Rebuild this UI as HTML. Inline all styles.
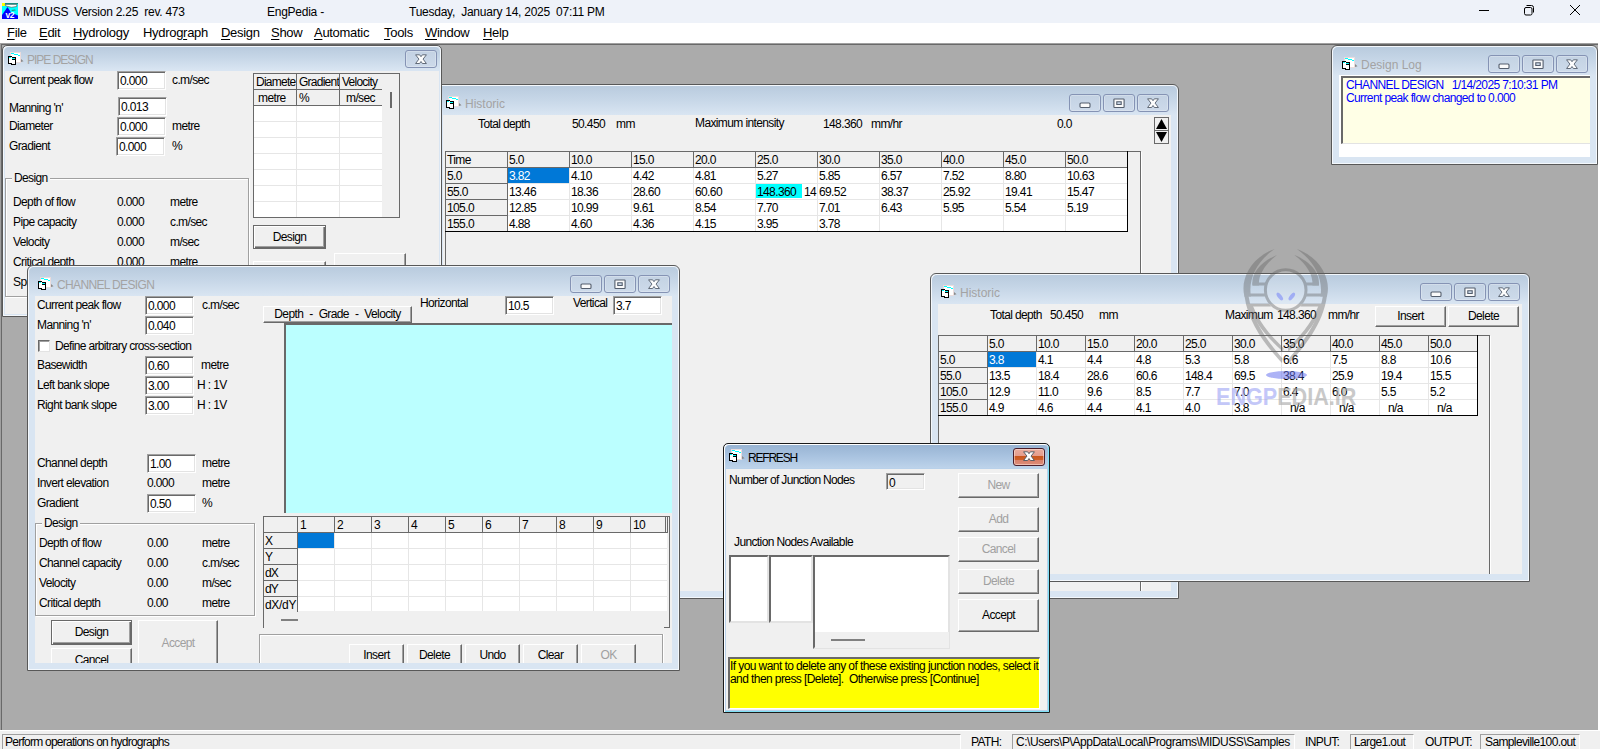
<!DOCTYPE html>
<html><head><meta charset="utf-8"><title>MIDUSS</title><style>
html,body{margin:0;padding:0}
body{width:1600px;height:749px;overflow:hidden;background:#fff;position:relative;font-family:"Liberation Sans",sans-serif;font-size:12px}
div,span,svg.abs,.abs{position:absolute}
#tbar{left:0;top:0;width:1600px;height:23px;background:#eef2f9}
#appico{position:absolute;left:2px;top:3px}
#apptitle span{position:absolute;top:5px;font-size:12px;line-height:15px;white-space:pre;letter-spacing:-0.25px;color:#000}
#wctl{position:absolute;left:1479px;top:0}
#mbar{left:0;top:23px;width:1600px;height:20px;background:#fff}
.mi{top:25px;font-size:13px;line-height:15px;color:#000;white-space:pre;letter-spacing:-0.3px}
.mi u{text-decoration:underline;text-underline-offset:2px}
#mdi{left:0;top:43px;width:1598px;height:687px;background:#ababab;overflow:hidden;border-top:1px solid #a0a0a0;border-left:1px solid #a0a0a0;box-shadow:inset 1px 1px #696969;box-sizing:border-box}
#mdi>*{margin-left:-1px;margin-top:-44px}
.t{font-size:12px;line-height:14px;white-space:pre;color:#000;letter-spacing:-0.62px}
.lg{background:#f0f0f0;padding:0 2px}
.tb{box-sizing:border-box;border:1px solid;border-color:#a0a0a0 #fff #fff #a0a0a0;box-shadow:inset 1px 1px #696969,inset -1px -1px #e3e3e3;overflow:hidden}
.tb span{left:2px;top:2px;font-size:12px;line-height:14px;letter-spacing:-0.62px;white-space:pre}
.btn{box-sizing:border-box;background:#f0f0f0;border:1px solid;border-color:#fff #696969 #696969 #fff;box-shadow:inset -1px -1px #a0a0a0;text-align:center;font-size:12px;letter-spacing:-0.62px;white-space:pre;color:#000}
.btn.def{border-color:#696969;box-shadow:inset 1px 1px #fff,inset -1px -1px #696969,inset -2px -2px #a0a0a0}
.btn.dis{color:#a0a0a0}
.btn.flat{border-color:#fff #696969 #696969 #fff}
.grp{box-sizing:border-box;border:1px solid #a0a0a0;box-shadow:inset 1px 1px #fff,1px 1px #fff}
.lb{box-sizing:border-box;background:#fff;border:2px solid;border-color:#696969 #e3e3e3 #e3e3e3 #696969}
.sp{box-sizing:border-box;border:1px solid;border-color:#a0a0a0 #fff #fff #a0a0a0;background:#f0f0f0}
#sbar{left:0;top:730px;width:1600px;height:19px;background:#f0f0f0;border-top:1px solid #fff;box-sizing:border-box}
.clip{overflow:hidden}
.win{box-sizing:border-box;border:1px solid #585858;border-radius:6px 6px 0 0;background:#d9e5f2;box-shadow:inset 1px 1px #f4f8fc,inset -1px -1px #f4f8fc}
.win::before{content:"";position:absolute;left:1px;top:1px;right:1px;height:29px;border-radius:5px 5px 0 0;background:linear-gradient(#b9cbde,#c6d6e7 45%,#d9e5f2)}
.win.thin{border-radius:5px 5px 0 0}
.win.thin::before{height:23px}
.win.act{border-color:#1a1a1a;background:#b9d1ea;box-shadow:inset 1px 1px #fff,inset -1px -1px #7fe0f5}
.win.act::before{background:linear-gradient(#98b4d3,#a9c3e0 50%,#bdd3ea)}
.wt{font-size:12px;line-height:14px;color:#a3a3a3;white-space:pre}
.win.act .wt{color:#000}
.cb{box-sizing:border-box;border:1px solid #8593b4;border-radius:3px;background:linear-gradient(#c3d2e3,#cddaea);box-shadow:inset 0 0 0 1px rgba(255,255,255,.25)}
.cb i,.cbx i{position:absolute;left:0;right:0;text-align:center;line-height:0}
.cb i svg,.cbx i svg{position:static}
.cbx{box-sizing:border-box;border:1px solid #4b1f2c;border-radius:3px;background:linear-gradient(#e9ab9c 0,#e59c8c 45%,#c9561d 46%,#cf5f2a 68%,#d8806a 69%,#dd8c78 100%);box-shadow:inset 0 0 0 1px rgba(255,230,220,.55)}
</style></head><body>
<div id="tbar"></div>
<svg id="appico" width="16" height="16" viewBox="0 0 16 16"><rect width="16" height="16" fill="#0ff"/><rect width="3" height="3" fill="#ff0"/><path d="M3 0h13v1H3z" fill="#1a8a80"/><path d="M3 1.500h12l-.5 2-5 .8L4 3z" fill="#fff" stroke="#5a4a48" stroke-width=".6"/><path d="M5.500 4L9 9.500l7 3V16H0v-4z" fill="#0000fe"/><path d="M9 7l4-.500 1 .8-3.500 .7z" fill="#2a8a7a"/><text x="3.600" y="14.600" font-family="Liberation Sans,sans-serif" font-weight="bold" font-size="8.500" fill="#fff" letter-spacing="-.5">v2</text></svg>
<span id="apptitle"><span style="left:23px">MIDUSS  Version 2.25  rev. 473</span><span style="left:267px">EngPedia -</span><span style="left:409px">Tuesday,  January 14, 2025  07:11 PM</span></span>
<svg id="wctl" width="120" height="23" viewBox="0 0 120 23"><path d="M0 10.500h10" stroke="#000" stroke-width="1" fill="none"/><path d="M47.500 5.500h5a2 2 0 0 1 2 2v5" stroke="#000" stroke-width="1" fill="none"/><rect x="45.500" y="7.500" width="7.500" height="7.500" rx="1.500" fill="none" stroke="#000" stroke-width="1"/><path d="M91 5l10 10M101 5l-10 10" stroke="#000" stroke-width="1" fill="none"/></svg>
<div id="mbar"></div>
<span class="mi" style="left:7px"><u>F</u>ile</span>
<span class="mi" style="left:39px"><u>E</u>dit</span>
<span class="mi" style="left:73px"><u>H</u>ydrology</span>
<span class="mi" style="left:143px">Hydrog<u>r</u>aph</span>
<span class="mi" style="left:221px"><u>D</u>esign</span>
<span class="mi" style="left:271px"><u>S</u>how</span>
<span class="mi" style="left:314px"><u>A</u>utomatic</span>
<span class="mi" style="left:384px"><u>T</u>ools</span>
<span class="mi" style="left:425px"><u>W</u>indow</span>
<span class="mi" style="left:483px"><u>H</u>elp</span>
<div id="mdi">
<div class="win" style="left:435px;top:84px;width:744px;height:515px">
<div class="ico" style="left:10px;top:11px"><svg class="wi" width="17" height="14" viewBox="0 0 17 14"><rect x="2.500" y="0.500" width="10" height="10" fill="#fff" stroke="#eadcdc" stroke-width="1"/><g shape-rendering="crispEdges"><rect x="3" y="1" width="3" height="1" fill="#0ff"/><rect x="6" y="2" width="4" height="1" fill="#0ff"/><rect x="10" y="3" width="2" height="1" fill="#0ff"/><path d="M0 4h4v1h4v8H3v-1H0z" fill="#000"/><path d="M1 5h3v1h3v6H4v-1H1z" fill="#fff"/><rect x="1" y="5" width="2" height="1" fill="#0ff"/><rect x="4" y="6" width="3" height="1" fill="#0ff"/><rect x="4" y="7" width="3" height="1" fill="#000"/></g><path d="M13 7l2.500 2.200-2.500 .8z" fill="#8a8a8a"/></svg></div>
<span class="wt" style="left:29px;top:12px;letter-spacing:0px">Historic</span>
</div>
<div class="cb" style="left:1069px;top:94px;width:32px;height:18px"><i style="top:7px"><svg width="13" height="7" viewBox="0 0 13 7"><rect x="1" y="1" width="10" height="4.500" rx="1" fill="#fafafa" stroke="#535d6c" stroke-width="1.100"/></svg></i></div>
<div class="cb" style="left:1103px;top:94px;width:32px;height:18px"><i style="top:3px"><svg width="13" height="11" viewBox="0 0 13 11"><path fill-rule="evenodd" d="M1.500 1h9a.6.6 0 0 1 .6.6v7.300a.6.6 0 0 1-.6.6h-9a.6.6 0 0 1-.6-.6V1.600a.6.6 0 0 1 .6-.6zM3.800 3.700v2.800h4.400V3.700z" fill="#fafafa" stroke="#535d6c" stroke-width="1.100"/></svg></i></div>
<div class="cb" style="left:1137px;top:94px;width:32px;height:18px"><i style="top:3px"><svg width="13" height="11" viewBox="0 0 13 11"><path d="M.600 .800h4L6 2.700 7.400 .800h4L8.100 5.100l3.300 4.400h-4L6 7.500 4.600 9.500h-4L3.900 5.100z" fill="#fdfdfd" stroke="#535d6c" stroke-width=".9" stroke-linejoin="round"/></svg></i></div>
<div style="left:443px;top:115px;width:728px;height:476px;background:#f0f0f0"></div>
<span class="t" style="left:478px;top:117px;">Total depth</span>
<span class="t" style="left:572px;top:117px;">50.450</span>
<span class="t" style="left:616px;top:117px;">mm</span>
<span class="t" style="left:695px;top:116px;">Maximum intensity</span>
<span class="t" style="left:823px;top:117px;">148.360</span>
<span class="t" style="left:871px;top:117px;">mm/hr</span>
<span class="t" style="left:1057px;top:117px;">0.0</span>
<div style="left:1154px;top:117px;width:15px;height:27px;background:#f0f0f0;border:1px solid #696969;box-sizing:border-box"></div>
<div style="left:1154px;top:130px;width:15px;height:1px;background:#696969"></div>
<svg class="abs" style="left:1156px;top:119px" width="11" height="23" viewBox="0 0 11 23"><path d="M5.500 0L11 10H0z" fill="#000"/><path d="M0 13h11L5.500 23z" fill="#000"/></svg>
<div style="left:445px;top:151px;width:696px;height:440px;border-left:1px solid #696969;border-top:1px solid #696969;border-right:1px solid #696969;box-sizing:border-box"></div>
<div style="left:1141px;top:152px;width:1px;height:439px;background:#fff"></div>
<div style="left:507px;top:167px;width:620px;height:64px;background:#fff"></div>
<div style="left:569px;top:167px;width:1px;height:64px;background:#e6e6e6"></div>
<div style="left:631px;top:167px;width:1px;height:64px;background:#e6e6e6"></div>
<div style="left:693px;top:167px;width:1px;height:64px;background:#e6e6e6"></div>
<div style="left:755px;top:167px;width:1px;height:64px;background:#e6e6e6"></div>
<div style="left:817px;top:167px;width:1px;height:64px;background:#e6e6e6"></div>
<div style="left:879px;top:167px;width:1px;height:64px;background:#e6e6e6"></div>
<div style="left:941px;top:167px;width:1px;height:64px;background:#e6e6e6"></div>
<div style="left:1003px;top:167px;width:1px;height:64px;background:#e6e6e6"></div>
<div style="left:1065px;top:167px;width:1px;height:64px;background:#e6e6e6"></div>
<div style="left:507px;top:183px;width:620px;height:1px;background:#e6e6e6"></div>
<div style="left:507px;top:199px;width:620px;height:1px;background:#e6e6e6"></div>
<div style="left:507px;top:215px;width:620px;height:1px;background:#e6e6e6"></div>
<div style="left:445px;top:151px;width:63px;height:17px;border:1px solid #696969;box-sizing:border-box;background:#f0f0f0"></div>
<span class="t" style="left:447px;top:153px;">Time</span>
<div style="left:507px;top:151px;width:63px;height:17px;border:1px solid #696969;box-sizing:border-box;background:#f0f0f0"></div>
<span class="t" style="left:509px;top:153px;">5.0</span>
<div style="left:569px;top:151px;width:63px;height:17px;border:1px solid #696969;box-sizing:border-box;background:#f0f0f0"></div>
<span class="t" style="left:571px;top:153px;">10.0</span>
<div style="left:631px;top:151px;width:63px;height:17px;border:1px solid #696969;box-sizing:border-box;background:#f0f0f0"></div>
<span class="t" style="left:633px;top:153px;">15.0</span>
<div style="left:693px;top:151px;width:63px;height:17px;border:1px solid #696969;box-sizing:border-box;background:#f0f0f0"></div>
<span class="t" style="left:695px;top:153px;">20.0</span>
<div style="left:755px;top:151px;width:63px;height:17px;border:1px solid #696969;box-sizing:border-box;background:#f0f0f0"></div>
<span class="t" style="left:757px;top:153px;">25.0</span>
<div style="left:817px;top:151px;width:63px;height:17px;border:1px solid #696969;box-sizing:border-box;background:#f0f0f0"></div>
<span class="t" style="left:819px;top:153px;">30.0</span>
<div style="left:879px;top:151px;width:63px;height:17px;border:1px solid #696969;box-sizing:border-box;background:#f0f0f0"></div>
<span class="t" style="left:881px;top:153px;">35.0</span>
<div style="left:941px;top:151px;width:63px;height:17px;border:1px solid #696969;box-sizing:border-box;background:#f0f0f0"></div>
<span class="t" style="left:943px;top:153px;">40.0</span>
<div style="left:1003px;top:151px;width:63px;height:17px;border:1px solid #696969;box-sizing:border-box;background:#f0f0f0"></div>
<span class="t" style="left:1005px;top:153px;">45.0</span>
<div style="left:1065px;top:151px;width:63px;height:17px;border:1px solid #696969;box-sizing:border-box;background:#f0f0f0"></div>
<span class="t" style="left:1067px;top:153px;">50.0</span>
<div style="left:445px;top:167px;width:63px;height:17px;border:1px solid #696969;box-sizing:border-box;background:#f0f0f0"></div>
<span class="t" style="left:447px;top:169px;">5.0</span>
<div style="left:445px;top:183px;width:63px;height:17px;border:1px solid #696969;box-sizing:border-box;background:#f0f0f0"></div>
<span class="t" style="left:447px;top:185px;">55.0</span>
<div style="left:445px;top:199px;width:63px;height:17px;border:1px solid #696969;box-sizing:border-box;background:#f0f0f0"></div>
<span class="t" style="left:447px;top:201px;">105.0</span>
<div style="left:445px;top:215px;width:63px;height:17px;border:1px solid #696969;box-sizing:border-box;background:#f0f0f0"></div>
<span class="t" style="left:447px;top:217px;">155.0</span>
<div style="left:445px;top:231px;width:683px;height:1px;background:#000"></div>
<div style="left:1127px;top:151px;width:1px;height:81px;background:#000"></div>
<div style="left:508px;top:168px;width:61px;height:15px;background:#0078d7"></div>
<span class="t" style="left:509px;top:169px;color:#fff">3.82</span>
<span class="t" style="left:571px;top:169px;">4.10</span>
<span class="t" style="left:633px;top:169px;">4.42</span>
<span class="t" style="left:695px;top:169px;">4.81</span>
<span class="t" style="left:757px;top:169px;">5.27</span>
<span class="t" style="left:819px;top:169px;">5.85</span>
<span class="t" style="left:881px;top:169px;">6.57</span>
<span class="t" style="left:943px;top:169px;">7.52</span>
<span class="t" style="left:1005px;top:169px;">8.80</span>
<span class="t" style="left:1067px;top:169px;">10.63</span>
<span class="t" style="left:509px;top:185px;">13.46</span>
<span class="t" style="left:571px;top:185px;">18.36</span>
<span class="t" style="left:633px;top:185px;">28.60</span>
<span class="t" style="left:695px;top:185px;">60.60</span>
<div style="left:756px;top:184px;width:46px;height:14px;background:#00ffff"></div>
<span class="t" style="left:757px;top:185px;">148.360</span>
<span class="t" style="left:804px;top:185px;">14</span>
<span class="t" style="left:819px;top:185px;">69.52</span>
<span class="t" style="left:881px;top:185px;">38.37</span>
<span class="t" style="left:943px;top:185px;">25.92</span>
<span class="t" style="left:1005px;top:185px;">19.41</span>
<span class="t" style="left:1067px;top:185px;">15.47</span>
<span class="t" style="left:509px;top:201px;">12.85</span>
<span class="t" style="left:571px;top:201px;">10.99</span>
<span class="t" style="left:633px;top:201px;">9.61</span>
<span class="t" style="left:695px;top:201px;">8.54</span>
<span class="t" style="left:757px;top:201px;">7.70</span>
<span class="t" style="left:819px;top:201px;">7.01</span>
<span class="t" style="left:881px;top:201px;">6.43</span>
<span class="t" style="left:943px;top:201px;">5.95</span>
<span class="t" style="left:1005px;top:201px;">5.54</span>
<span class="t" style="left:1067px;top:201px;">5.19</span>
<span class="t" style="left:509px;top:217px;">4.88</span>
<span class="t" style="left:571px;top:217px;">4.60</span>
<span class="t" style="left:633px;top:217px;">4.36</span>
<span class="t" style="left:695px;top:217px;">4.15</span>
<span class="t" style="left:757px;top:217px;">3.95</span>
<span class="t" style="left:819px;top:217px;">3.78</span>
<div class="win thin" style="left:2px;top:45px;width:440px;height:272px">
<div class="ico" style="left:5px;top:6px"><svg class="wi" width="17" height="14" viewBox="0 0 17 14"><rect x="2.500" y="0.500" width="10" height="10" fill="#fff" stroke="#eadcdc" stroke-width="1"/><g shape-rendering="crispEdges"><rect x="3" y="1" width="3" height="1" fill="#0ff"/><rect x="6" y="2" width="4" height="1" fill="#0ff"/><rect x="10" y="3" width="2" height="1" fill="#0ff"/><path d="M0 4h4v1h4v8H3v-1H0z" fill="#000"/><path d="M1 5h3v1h3v6H4v-1H1z" fill="#fff"/><rect x="1" y="5" width="2" height="1" fill="#0ff"/><rect x="4" y="6" width="3" height="1" fill="#0ff"/><rect x="4" y="7" width="3" height="1" fill="#000"/></g><path d="M13 7l2.500 2.200-2.500 .8z" fill="#8a8a8a"/></svg></div>
<span class="wt" style="left:24px;top:7px;letter-spacing:-1px">PIPE DESIGN</span>
</div>
<div class="cb" style="left:405px;top:50px;width:32px;height:18px"><i style="top:3px"><svg width="13" height="11" viewBox="0 0 13 11"><path d="M.600 .800h4L6 2.700 7.400 .800h4L8.100 5.100l3.300 4.400h-4L6 7.500 4.600 9.500h-4L3.900 5.100z" fill="#fdfdfd" stroke="#535d6c" stroke-width=".9" stroke-linejoin="round"/></svg></i></div>
<div style="left:5px;top:71px;width:434px;height:243px;background:#f0f0f0"></div>
<span class="t" style="left:9px;top:73px;">Current peak flow</span>
<div class="tb" style="left:117px;top:71px;width:49px;height:19px;background:#fff;"><span>0.000</span></div>
<span class="t" style="left:172px;top:73px;">c.m/sec</span>
<span class="t" style="left:9px;top:101px;">Manning 'n'</span>
<div class="tb" style="left:118px;top:97px;width:49px;height:19px;background:#fff;"><span>0.013</span></div>
<span class="t" style="left:9px;top:119px;">Diameter</span>
<div class="tb" style="left:117px;top:117px;width:49px;height:19px;background:#fff;"><span>0.000</span></div>
<span class="t" style="left:172px;top:119px;">metre</span>
<span class="t" style="left:9px;top:139px;">Gradient</span>
<div class="tb" style="left:116px;top:137px;width:49px;height:19px;background:#fff;"><span>0.000</span></div>
<span class="t" style="left:172px;top:139px;">%</span>
<div class="grp" style="left:5px;top:178px;width:244px;height:119px;"></div>
<span class="t lg" style="left:12px;top:171px">Design</span>
<span class="t" style="left:13px;top:195px;">Depth of flow</span>
<span class="t" style="left:117px;top:195px;">0.000</span>
<span class="t" style="left:170px;top:195px;">metre</span>
<span class="t" style="left:13px;top:215px;">Pipe capacity</span>
<span class="t" style="left:117px;top:215px;">0.000</span>
<span class="t" style="left:170px;top:215px;">c.m/sec</span>
<span class="t" style="left:13px;top:235px;">Velocity</span>
<span class="t" style="left:117px;top:235px;">0.000</span>
<span class="t" style="left:170px;top:235px;">m/sec</span>
<span class="t" style="left:13px;top:255px;">Critical depth</span>
<span class="t" style="left:117px;top:255px;">0.000</span>
<span class="t" style="left:170px;top:255px;">metre</span>
<span class="t" style="left:13px;top:275px;">Specific energy</span>
<span class="t" style="left:117px;top:275px;">0.000</span>
<span class="t" style="left:170px;top:275px;">metre</span>
<div style="left:253px;top:73px;width:147px;height:145px;border:1px solid #696969;box-sizing:border-box;background:#f0f0f0"></div>
<div style="left:254px;top:105px;width:128px;height:112px;background:#fff"></div>
<div style="left:296px;top:105px;width:1px;height:112px;background:#e6e6e6"></div>
<div style="left:339px;top:105px;width:1px;height:112px;background:#e6e6e6"></div>
<div style="left:254px;top:121px;width:128px;height:1px;background:#e6e6e6"></div>
<div style="left:254px;top:137px;width:128px;height:1px;background:#e6e6e6"></div>
<div style="left:254px;top:153px;width:128px;height:1px;background:#e6e6e6"></div>
<div style="left:254px;top:169px;width:128px;height:1px;background:#e6e6e6"></div>
<div style="left:254px;top:185px;width:128px;height:1px;background:#e6e6e6"></div>
<div style="left:254px;top:201px;width:128px;height:1px;background:#e6e6e6"></div>
<div style="left:253px;top:73px;width:44px;height:17px;border:1px solid #696969;box-sizing:border-box;background:#f0f0f0"></div>
<div style="left:253px;top:89px;width:44px;height:17px;border:1px solid #696969;box-sizing:border-box;background:#f0f0f0"></div>
<span class="t" style="left:256px;top:75px;letter-spacing:-0.75px">Diamete</span>
<span class="t" style="left:258px;top:91px;">metre</span>
<div style="left:296px;top:73px;width:44px;height:17px;border:1px solid #696969;box-sizing:border-box;background:#f0f0f0"></div>
<div style="left:296px;top:89px;width:44px;height:17px;border:1px solid #696969;box-sizing:border-box;background:#f0f0f0"></div>
<span class="t" style="left:299px;top:75px;letter-spacing:-0.75px">Gradient</span>
<span class="t" style="left:299px;top:91px;">%</span>
<div style="left:339px;top:73px;width:44px;height:17px;border:1px solid #696969;box-sizing:border-box;background:#f0f0f0"></div>
<div style="left:339px;top:89px;width:44px;height:17px;border:1px solid #696969;box-sizing:border-box;background:#f0f0f0"></div>
<span class="t" style="left:342px;top:75px;letter-spacing:-0.75px">Velocity</span>
<span class="t" style="left:346px;top:91px;">m/sec</span>
<div style="left:382px;top:74px;width:1px;height:32px;background:#f0f0f0"></div>
<div style="left:390px;top:92px;width:2px;height:16px;background:#696969"></div>
<div class="btn def" style="left:253px;top:225px;width:73px;height:24px;line-height:22px;">Design</div>
<div class="btn " style="left:253px;top:261px;width:73px;height:24px;line-height:22px;">Cancel</div>
<div class="btn dis" style="left:334px;top:253px;width:72px;height:40px;line-height:38px;">Accept</div>
<div class="win" style="left:1331px;top:45px;width:267px;height:120px">
<div class="ico" style="left:10px;top:11px"><svg class="wi" width="17" height="14" viewBox="0 0 17 14"><rect x="2.500" y="0.500" width="10" height="10" fill="#fff" stroke="#eadcdc" stroke-width="1"/><g shape-rendering="crispEdges"><rect x="3" y="1" width="3" height="1" fill="#0ff"/><rect x="6" y="2" width="4" height="1" fill="#0ff"/><rect x="10" y="3" width="2" height="1" fill="#0ff"/><path d="M0 4h4v1h4v8H3v-1H0z" fill="#000"/><path d="M1 5h3v1h3v6H4v-1H1z" fill="#fff"/><rect x="1" y="5" width="2" height="1" fill="#0ff"/><rect x="4" y="6" width="3" height="1" fill="#0ff"/><rect x="4" y="7" width="3" height="1" fill="#000"/></g><path d="M13 7l2.500 2.200-2.500 .8z" fill="#8a8a8a"/></svg></div>
<span class="wt" style="left:29px;top:12px;letter-spacing:0px">Design Log</span>
</div>
<div class="cb" style="left:1488px;top:55px;width:32px;height:18px"><i style="top:7px"><svg width="13" height="7" viewBox="0 0 13 7"><rect x="1" y="1" width="10" height="4.500" rx="1" fill="#fafafa" stroke="#535d6c" stroke-width="1.100"/></svg></i></div>
<div class="cb" style="left:1522px;top:55px;width:32px;height:18px"><i style="top:3px"><svg width="13" height="11" viewBox="0 0 13 11"><path fill-rule="evenodd" d="M1.500 1h9a.6.6 0 0 1 .6.6v7.300a.6.6 0 0 1-.6.6h-9a.6.6 0 0 1-.6-.6V1.600a.6.6 0 0 1 .6-.6zM3.800 3.700v2.800h4.400V3.700z" fill="#fafafa" stroke="#535d6c" stroke-width="1.100"/></svg></i></div>
<div class="cb" style="left:1556px;top:55px;width:32px;height:18px"><i style="top:3px"><svg width="13" height="11" viewBox="0 0 13 11"><path d="M.600 .800h4L6 2.700 7.400 .800h4L8.100 5.100l3.300 4.400h-4L6 7.500 4.600 9.500h-4L3.900 5.100z" fill="#fdfdfd" stroke="#535d6c" stroke-width=".9" stroke-linejoin="round"/></svg></i></div>
<div style="left:1339px;top:75px;width:251px;height:82px;background:#fff"></div>
<div style="left:1341px;top:76px;width:249px;height:68px;background:#ffffe6;border-left:2px solid #696969;border-top:2px solid #696969;border-bottom:1px solid #e3e3e3;box-sizing:border-box"></div>
<span class="t" style="left:1346px;top:78px;color:#0000ff">CHANNEL DESIGN   1/14/2025 7:10:31 PM</span>
<span class="t" style="left:1346px;top:91px;color:#0000ff">Current peak flow changed to 0.000</span>
<div class="win" style="left:930px;top:273px;width:600px;height:309px">
<div class="ico" style="left:10px;top:11px"><svg class="wi" width="17" height="14" viewBox="0 0 17 14"><rect x="2.500" y="0.500" width="10" height="10" fill="#fff" stroke="#eadcdc" stroke-width="1"/><g shape-rendering="crispEdges"><rect x="3" y="1" width="3" height="1" fill="#0ff"/><rect x="6" y="2" width="4" height="1" fill="#0ff"/><rect x="10" y="3" width="2" height="1" fill="#0ff"/><path d="M0 4h4v1h4v8H3v-1H0z" fill="#000"/><path d="M1 5h3v1h3v6H4v-1H1z" fill="#fff"/><rect x="1" y="5" width="2" height="1" fill="#0ff"/><rect x="4" y="6" width="3" height="1" fill="#0ff"/><rect x="4" y="7" width="3" height="1" fill="#000"/></g><path d="M13 7l2.500 2.200-2.500 .8z" fill="#8a8a8a"/></svg></div>
<span class="wt" style="left:29px;top:12px;letter-spacing:0px">Historic</span>
</div>
<div class="cb" style="left:1420px;top:283px;width:32px;height:18px"><i style="top:7px"><svg width="13" height="7" viewBox="0 0 13 7"><rect x="1" y="1" width="10" height="4.500" rx="1" fill="#fafafa" stroke="#535d6c" stroke-width="1.100"/></svg></i></div>
<div class="cb" style="left:1454px;top:283px;width:32px;height:18px"><i style="top:3px"><svg width="13" height="11" viewBox="0 0 13 11"><path fill-rule="evenodd" d="M1.500 1h9a.6.6 0 0 1 .6.6v7.300a.6.6 0 0 1-.6.6h-9a.6.6 0 0 1-.6-.6V1.600a.6.6 0 0 1 .6-.6zM3.800 3.700v2.800h4.400V3.700z" fill="#fafafa" stroke="#535d6c" stroke-width="1.100"/></svg></i></div>
<div class="cb" style="left:1488px;top:283px;width:32px;height:18px"><i style="top:3px"><svg width="13" height="11" viewBox="0 0 13 11"><path d="M.600 .800h4L6 2.700 7.400 .800h4L8.100 5.100l3.300 4.400h-4L6 7.500 4.600 9.500h-4L3.900 5.100z" fill="#fdfdfd" stroke="#535d6c" stroke-width=".9" stroke-linejoin="round"/></svg></i></div>
<div style="left:938px;top:304px;width:584px;height:270px;background:#f0f0f0"></div>
<span class="t" style="left:990px;top:308px;">Total depth</span>
<span class="t" style="left:1050px;top:308px;">50.450</span>
<span class="t" style="left:1099px;top:308px;">mm</span>
<span class="t" style="left:1225px;top:308px;">Maximum</span>
<span class="t" style="left:1277px;top:308px;">148.360</span>
<span class="t" style="left:1328px;top:308px;">mm/hr</span>
<div class="btn " style="left:1375px;top:306px;width:71px;height:21px;line-height:19px;">Insert</div>
<div class="btn " style="left:1448px;top:306px;width:71px;height:21px;line-height:19px;">Delete</div>
<div style="left:938px;top:335px;width:552px;height:239px;border-left:1px solid #696969;border-top:1px solid #696969;border-right:1px solid #696969;box-sizing:border-box"></div>
<div style="left:1490px;top:336px;width:1px;height:238px;background:#fff"></div>
<div style="left:987px;top:351px;width:490px;height:64px;background:#fff"></div>
<div style="left:1036px;top:351px;width:1px;height:64px;background:#e6e6e6"></div>
<div style="left:1085px;top:351px;width:1px;height:64px;background:#e6e6e6"></div>
<div style="left:1134px;top:351px;width:1px;height:64px;background:#e6e6e6"></div>
<div style="left:1183px;top:351px;width:1px;height:64px;background:#e6e6e6"></div>
<div style="left:1232px;top:351px;width:1px;height:64px;background:#e6e6e6"></div>
<div style="left:1281px;top:351px;width:1px;height:64px;background:#e6e6e6"></div>
<div style="left:1330px;top:351px;width:1px;height:64px;background:#e6e6e6"></div>
<div style="left:1379px;top:351px;width:1px;height:64px;background:#e6e6e6"></div>
<div style="left:1428px;top:351px;width:1px;height:64px;background:#e6e6e6"></div>
<div style="left:987px;top:367px;width:490px;height:1px;background:#e6e6e6"></div>
<div style="left:987px;top:383px;width:490px;height:1px;background:#e6e6e6"></div>
<div style="left:987px;top:399px;width:490px;height:1px;background:#e6e6e6"></div>
<div style="left:938px;top:335px;width:50px;height:17px;border:1px solid #696969;box-sizing:border-box;background:#f0f0f0"></div>
<div style="left:987px;top:335px;width:50px;height:17px;border:1px solid #696969;box-sizing:border-box;background:#f0f0f0"></div>
<span class="t" style="left:989px;top:337px;">5.0</span>
<div style="left:1036px;top:335px;width:50px;height:17px;border:1px solid #696969;box-sizing:border-box;background:#f0f0f0"></div>
<span class="t" style="left:1038px;top:337px;">10.0</span>
<div style="left:1085px;top:335px;width:50px;height:17px;border:1px solid #696969;box-sizing:border-box;background:#f0f0f0"></div>
<span class="t" style="left:1087px;top:337px;">15.0</span>
<div style="left:1134px;top:335px;width:50px;height:17px;border:1px solid #696969;box-sizing:border-box;background:#f0f0f0"></div>
<span class="t" style="left:1136px;top:337px;">20.0</span>
<div style="left:1183px;top:335px;width:50px;height:17px;border:1px solid #696969;box-sizing:border-box;background:#f0f0f0"></div>
<span class="t" style="left:1185px;top:337px;">25.0</span>
<div style="left:1232px;top:335px;width:50px;height:17px;border:1px solid #696969;box-sizing:border-box;background:#f0f0f0"></div>
<span class="t" style="left:1234px;top:337px;">30.0</span>
<div style="left:1281px;top:335px;width:50px;height:17px;border:1px solid #696969;box-sizing:border-box;background:#f0f0f0"></div>
<span class="t" style="left:1283px;top:337px;">35.0</span>
<div style="left:1330px;top:335px;width:50px;height:17px;border:1px solid #696969;box-sizing:border-box;background:#f0f0f0"></div>
<span class="t" style="left:1332px;top:337px;">40.0</span>
<div style="left:1379px;top:335px;width:50px;height:17px;border:1px solid #696969;box-sizing:border-box;background:#f0f0f0"></div>
<span class="t" style="left:1381px;top:337px;">45.0</span>
<div style="left:1428px;top:335px;width:50px;height:17px;border:1px solid #696969;box-sizing:border-box;background:#f0f0f0"></div>
<span class="t" style="left:1430px;top:337px;">50.0</span>
<div style="left:938px;top:351px;width:50px;height:17px;border:1px solid #696969;box-sizing:border-box;background:#f0f0f0"></div>
<span class="t" style="left:940px;top:353px;">5.0</span>
<div style="left:938px;top:367px;width:50px;height:17px;border:1px solid #696969;box-sizing:border-box;background:#f0f0f0"></div>
<span class="t" style="left:940px;top:369px;">55.0</span>
<div style="left:938px;top:383px;width:50px;height:17px;border:1px solid #696969;box-sizing:border-box;background:#f0f0f0"></div>
<span class="t" style="left:940px;top:385px;">105.0</span>
<div style="left:938px;top:399px;width:50px;height:17px;border:1px solid #696969;box-sizing:border-box;background:#f0f0f0"></div>
<span class="t" style="left:940px;top:401px;">155.0</span>
<div style="left:938px;top:415px;width:540px;height:1px;background:#000"></div>
<div style="left:1477px;top:335px;width:1px;height:81px;background:#000"></div>
<div style="left:988px;top:352px;width:48px;height:15px;background:#0078d7"></div>
<span class="t" style="left:989px;top:353px;color:#fff">3.8</span>
<span class="t" style="left:1038px;top:353px;">4.1</span>
<span class="t" style="left:1087px;top:353px;">4.4</span>
<span class="t" style="left:1136px;top:353px;">4.8</span>
<span class="t" style="left:1185px;top:353px;">5.3</span>
<span class="t" style="left:1234px;top:353px;">5.8</span>
<span class="t" style="left:1283px;top:353px;">6.6</span>
<span class="t" style="left:1332px;top:353px;">7.5</span>
<span class="t" style="left:1381px;top:353px;">8.8</span>
<span class="t" style="left:1430px;top:353px;">10.6</span>
<span class="t" style="left:989px;top:369px;">13.5</span>
<span class="t" style="left:1038px;top:369px;">18.4</span>
<span class="t" style="left:1087px;top:369px;">28.6</span>
<span class="t" style="left:1136px;top:369px;">60.6</span>
<span class="t" style="left:1185px;top:369px;">148.4</span>
<span class="t" style="left:1234px;top:369px;">69.5</span>
<span class="t" style="left:1283px;top:369px;">38.4</span>
<span class="t" style="left:1332px;top:369px;">25.9</span>
<span class="t" style="left:1381px;top:369px;">19.4</span>
<span class="t" style="left:1430px;top:369px;">15.5</span>
<span class="t" style="left:989px;top:385px;">12.9</span>
<span class="t" style="left:1038px;top:385px;">11.0</span>
<span class="t" style="left:1087px;top:385px;">9.6</span>
<span class="t" style="left:1136px;top:385px;">8.5</span>
<span class="t" style="left:1185px;top:385px;">7.7</span>
<span class="t" style="left:1234px;top:385px;">7.0</span>
<span class="t" style="left:1283px;top:385px;">6.4</span>
<span class="t" style="left:1332px;top:385px;">6.0</span>
<span class="t" style="left:1381px;top:385px;">5.5</span>
<span class="t" style="left:1430px;top:385px;">5.2</span>
<span class="t" style="left:989px;top:401px;">4.9</span>
<span class="t" style="left:1038px;top:401px;">4.6</span>
<span class="t" style="left:1087px;top:401px;">4.4</span>
<span class="t" style="left:1136px;top:401px;">4.1</span>
<span class="t" style="left:1185px;top:401px;">4.0</span>
<span class="t" style="left:1234px;top:401px;">3.8</span>
<span class="t" style="left:1290px;top:401px;">n/a</span>
<span class="t" style="left:1339px;top:401px;">n/a</span>
<span class="t" style="left:1388px;top:401px;">n/a</span>
<span class="t" style="left:1437px;top:401px;">n/a</span>
<div class="win" style="left:27px;top:265px;width:653px;height:406px">
<div class="ico" style="left:10px;top:11px"><svg class="wi" width="17" height="14" viewBox="0 0 17 14"><rect x="2.500" y="0.500" width="10" height="10" fill="#fff" stroke="#eadcdc" stroke-width="1"/><g shape-rendering="crispEdges"><rect x="3" y="1" width="3" height="1" fill="#0ff"/><rect x="6" y="2" width="4" height="1" fill="#0ff"/><rect x="10" y="3" width="2" height="1" fill="#0ff"/><path d="M0 4h4v1h4v8H3v-1H0z" fill="#000"/><path d="M1 5h3v1h3v6H4v-1H1z" fill="#fff"/><rect x="1" y="5" width="2" height="1" fill="#0ff"/><rect x="4" y="6" width="3" height="1" fill="#0ff"/><rect x="4" y="7" width="3" height="1" fill="#000"/></g><path d="M13 7l2.500 2.200-2.500 .8z" fill="#8a8a8a"/></svg></div>
<span class="wt" style="left:29px;top:12px;letter-spacing:-0.65px">CHANNEL DESIGN</span>
</div>
<div class="cb" style="left:570px;top:275px;width:32px;height:18px"><i style="top:7px"><svg width="13" height="7" viewBox="0 0 13 7"><rect x="1" y="1" width="10" height="4.500" rx="1" fill="#fafafa" stroke="#535d6c" stroke-width="1.100"/></svg></i></div>
<div class="cb" style="left:604px;top:275px;width:32px;height:18px"><i style="top:3px"><svg width="13" height="11" viewBox="0 0 13 11"><path fill-rule="evenodd" d="M1.500 1h9a.6.6 0 0 1 .6.6v7.300a.6.6 0 0 1-.6.6h-9a.6.6 0 0 1-.6-.6V1.600a.6.6 0 0 1 .6-.6zM3.800 3.700v2.800h4.400V3.700z" fill="#fafafa" stroke="#535d6c" stroke-width="1.100"/></svg></i></div>
<div class="cb" style="left:638px;top:275px;width:32px;height:18px"><i style="top:3px"><svg width="13" height="11" viewBox="0 0 13 11"><path d="M.600 .800h4L6 2.700 7.400 .800h4L8.100 5.100l3.300 4.400h-4L6 7.500 4.600 9.500h-4L3.900 5.100z" fill="#fdfdfd" stroke="#535d6c" stroke-width=".9" stroke-linejoin="round"/></svg></i></div>
<div class="clip" style="left:35px;top:296px;width:637px;height:367px;background:#f0f0f0"><div style="position:absolute;left:-35px;top:-296px">
<span class="t" style="left:37px;top:298px;">Current peak flow</span>
<div class="tb" style="left:145px;top:296px;width:49px;height:19px;background:#fff;"><span>0.000</span></div>
<span class="t" style="left:202px;top:298px;">c.m/sec</span>
<span class="t" style="left:37px;top:318px;">Manning 'n'</span>
<div class="tb" style="left:145px;top:316px;width:49px;height:19px;background:#fff;"><span>0.040</span></div>
<div style="left:38px;top:340px;width:12px;height:12px;background:#fff;border:1px solid;border-color:#696969 #e3e3e3 #e3e3e3 #696969;box-sizing:border-box;box-shadow:inset 1px 1px #a0a0a0"></div>
<span class="t" style="left:55px;top:339px;letter-spacing:-0.66px">Define arbitrary cross-section</span>
<span class="t" style="left:37px;top:358px;">Basewidth</span>
<div class="tb" style="left:145px;top:356px;width:49px;height:19px;background:#fff;"><span>0.60</span></div>
<span class="t" style="left:201px;top:358px;">metre</span>
<span class="t" style="left:37px;top:378px;">Left bank slope</span>
<div class="tb" style="left:145px;top:376px;width:49px;height:19px;background:#fff;"><span>3.00</span></div>
<span class="t" style="left:197px;top:378px;">H : 1V</span>
<span class="t" style="left:37px;top:398px;">Right bank slope</span>
<div class="tb" style="left:145px;top:396px;width:49px;height:19px;background:#fff;"><span>3.00</span></div>
<span class="t" style="left:197px;top:398px;">H : 1V</span>
<span class="t" style="left:37px;top:456px;">Channel depth</span>
<div class="tb" style="left:147px;top:454px;width:49px;height:19px;background:#fff;"><span>1.00</span></div>
<span class="t" style="left:202px;top:456px;">metre</span>
<span class="t" style="left:37px;top:476px;">Invert elevation</span>
<span class="t" style="left:147px;top:476px;">0.000</span>
<span class="t" style="left:202px;top:476px;">metre</span>
<span class="t" style="left:37px;top:496px;">Gradient</span>
<div class="tb" style="left:147px;top:494px;width:49px;height:19px;background:#fff;"><span>0.50</span></div>
<span class="t" style="left:202px;top:496px;">%</span>
<div class="grp" style="left:35px;top:523px;width:220px;height:93px;"></div>
<span class="t lg" style="left:42px;top:516px">Design</span>
<span class="t" style="left:39px;top:536px;">Depth of flow</span>
<span class="t" style="left:147px;top:536px;">0.00</span>
<span class="t" style="left:202px;top:536px;">metre</span>
<span class="t" style="left:39px;top:556px;">Channel capacity</span>
<span class="t" style="left:147px;top:556px;">0.00</span>
<span class="t" style="left:202px;top:556px;">c.m/sec</span>
<span class="t" style="left:39px;top:576px;">Velocity</span>
<span class="t" style="left:147px;top:576px;">0.00</span>
<span class="t" style="left:202px;top:576px;">m/sec</span>
<span class="t" style="left:39px;top:596px;">Critical depth</span>
<span class="t" style="left:147px;top:596px;">0.00</span>
<span class="t" style="left:202px;top:596px;">metre</span>
<div class="btn def" style="left:51px;top:620px;width:81px;height:25px;line-height:23px;">Design</div>
<div class="btn " style="left:51px;top:648px;width:81px;height:25px;line-height:23px;">Cancel</div>
<div class="btn dis" style="left:138px;top:620px;width:80px;height:46px;line-height:44px;">Accept</div>
<div class="btn flat" style="left:263px;top:306px;width:149px;height:17px;line-height:15px;word-spacing:0.3px">Depth  -  Grade  -  Velocity</div>
<span class="t" style="left:420px;top:296px;">Horizontal</span>
<div class="tb" style="left:505px;top:296px;width:49px;height:19px;background:#fff;"><span>10.5</span></div>
<span class="t" style="left:573px;top:296px;">Vertical</span>
<div class="tb" style="left:613px;top:296px;width:49px;height:19px;background:#fff;"><span>3.7</span></div>
<div style="left:284px;top:323px;width:388px;height:190px;background:#bbffff;border-left:2px solid #696969;border-top:2px solid #696969;box-sizing:border-box"></div>
<div style="left:263px;top:516px;width:407px;height:112px;border-left:1px solid #696969;border-top:1px solid #696969;box-sizing:border-box"></div>
<div style="left:669px;top:516px;width:1px;height:112px;background:#696969"></div>
<div style="left:664px;top:627px;width:6px;height:1px;background:#696969"></div>
<div style="left:297px;top:532px;width:370px;height:79px;background:#fff"></div>
<div style="left:334px;top:532px;width:1px;height:79px;background:#e6e6e6"></div>
<div style="left:371px;top:532px;width:1px;height:79px;background:#e6e6e6"></div>
<div style="left:408px;top:532px;width:1px;height:79px;background:#e6e6e6"></div>
<div style="left:445px;top:532px;width:1px;height:79px;background:#e6e6e6"></div>
<div style="left:482px;top:532px;width:1px;height:79px;background:#e6e6e6"></div>
<div style="left:519px;top:532px;width:1px;height:79px;background:#e6e6e6"></div>
<div style="left:556px;top:532px;width:1px;height:79px;background:#e6e6e6"></div>
<div style="left:593px;top:532px;width:1px;height:79px;background:#e6e6e6"></div>
<div style="left:630px;top:532px;width:1px;height:79px;background:#e6e6e6"></div>
<div style="left:297px;top:548px;width:370px;height:1px;background:#e6e6e6"></div>
<div style="left:297px;top:564px;width:370px;height:1px;background:#e6e6e6"></div>
<div style="left:297px;top:580px;width:370px;height:1px;background:#e6e6e6"></div>
<div style="left:297px;top:596px;width:370px;height:1px;background:#e6e6e6"></div>
<div style="left:263px;top:516px;width:35px;height:17px;border:1px solid #696969;box-sizing:border-box;background:#f0f0f0"></div>
<div style="left:297px;top:516px;width:38px;height:17px;border:1px solid #696969;box-sizing:border-box;background:#f0f0f0"></div>
<span class="t" style="left:300px;top:518px;">1</span>
<div style="left:334px;top:516px;width:38px;height:17px;border:1px solid #696969;box-sizing:border-box;background:#f0f0f0"></div>
<span class="t" style="left:337px;top:518px;">2</span>
<div style="left:371px;top:516px;width:38px;height:17px;border:1px solid #696969;box-sizing:border-box;background:#f0f0f0"></div>
<span class="t" style="left:374px;top:518px;">3</span>
<div style="left:408px;top:516px;width:38px;height:17px;border:1px solid #696969;box-sizing:border-box;background:#f0f0f0"></div>
<span class="t" style="left:411px;top:518px;">4</span>
<div style="left:445px;top:516px;width:38px;height:17px;border:1px solid #696969;box-sizing:border-box;background:#f0f0f0"></div>
<span class="t" style="left:448px;top:518px;">5</span>
<div style="left:482px;top:516px;width:38px;height:17px;border:1px solid #696969;box-sizing:border-box;background:#f0f0f0"></div>
<span class="t" style="left:485px;top:518px;">6</span>
<div style="left:519px;top:516px;width:38px;height:17px;border:1px solid #696969;box-sizing:border-box;background:#f0f0f0"></div>
<span class="t" style="left:522px;top:518px;">7</span>
<div style="left:556px;top:516px;width:38px;height:17px;border:1px solid #696969;box-sizing:border-box;background:#f0f0f0"></div>
<span class="t" style="left:559px;top:518px;">8</span>
<div style="left:593px;top:516px;width:38px;height:17px;border:1px solid #696969;box-sizing:border-box;background:#f0f0f0"></div>
<span class="t" style="left:596px;top:518px;">9</span>
<div style="left:630px;top:516px;width:38px;height:17px;border:1px solid #696969;box-sizing:border-box;background:#f0f0f0"></div>
<span class="t" style="left:633px;top:518px;">10</span>
<div style="left:665px;top:516px;width:1px;height:17px;background:#696969"></div>
<div style="left:263px;top:532px;width:35px;height:17px;border:1px solid #696969;border-bottom-width:1px;box-sizing:border-box;background:#f0f0f0"></div>
<span class="t" style="left:265px;top:534px;letter-spacing:-1px">X</span>
<div style="left:263px;top:548px;width:35px;height:17px;border:1px solid #696969;border-bottom-width:1px;box-sizing:border-box;background:#f0f0f0"></div>
<span class="t" style="left:265px;top:550px;letter-spacing:-1px">Y</span>
<div style="left:263px;top:564px;width:35px;height:17px;border:1px solid #696969;border-bottom-width:1px;box-sizing:border-box;background:#f0f0f0"></div>
<span class="t" style="left:265px;top:566px;letter-spacing:-1px">dX</span>
<div style="left:263px;top:580px;width:35px;height:17px;border:1px solid #696969;border-bottom-width:1px;box-sizing:border-box;background:#f0f0f0"></div>
<span class="t" style="left:265px;top:582px;letter-spacing:-1px">dY</span>
<div style="left:263px;top:596px;width:35px;height:16px;border:1px solid #696969;border-bottom-width:0px;box-sizing:border-box;background:#f0f0f0"></div>
<span class="t" style="left:265px;top:598px;letter-spacing:-0.3px">dX/dY</span>
<div style="left:298px;top:533px;width:36px;height:15px;background:#0078d7"></div>
<div style="left:281px;top:619px;width:17px;height:2px;background:#808080"></div>
<div style="left:259px;top:634px;width:404px;height:40px;border:1px solid #a0a0a0;border-right-color:#a0a0a0;box-sizing:border-box;box-shadow:inset 1px 1px #fff, 1px 0 #fff"></div>
<div class="btn " style="left:349px;top:644px;width:55px;height:22px;line-height:20px;">Insert</div>
<div class="btn " style="left:407px;top:644px;width:55px;height:22px;line-height:20px;">Delete</div>
<div class="btn " style="left:465px;top:644px;width:55px;height:22px;line-height:20px;">Undo</div>
<div class="btn " style="left:523px;top:644px;width:55px;height:22px;line-height:20px;">Clear</div>
<div class="btn dis" style="left:581px;top:644px;width:55px;height:22px;line-height:20px;">OK</div>
</div></div>
<div class="win act thin" style="left:723px;top:443px;width:327px;height:270px">
<div class="ico" style="left:5px;top:5px"><svg class="wi" width="17" height="14" viewBox="0 0 17 14"><rect x="2.500" y="0.500" width="10" height="10" fill="#fff" stroke="#eadcdc" stroke-width="1"/><g shape-rendering="crispEdges"><rect x="3" y="1" width="3" height="1" fill="#0ff"/><rect x="6" y="2" width="4" height="1" fill="#0ff"/><rect x="10" y="3" width="2" height="1" fill="#0ff"/><path d="M0 4h4v1h4v8H3v-1H0z" fill="#000"/><path d="M1 5h3v1h3v6H4v-1H1z" fill="#fff"/><rect x="1" y="5" width="2" height="1" fill="#0ff"/><rect x="4" y="6" width="3" height="1" fill="#0ff"/><rect x="4" y="7" width="3" height="1" fill="#000"/></g><path d="M13 7l2.500 2.200-2.500 .8z" fill="#8a8a8a"/></svg></div>
<span class="wt" style="left:24px;top:7px;letter-spacing:-1.2px">REFRESH</span>
</div>
<div class="cbx" style="left:1013px;top:448px;width:32px;height:18px"><i style="top:2px"><svg width="13" height="11" viewBox="0 0 13 11"><path d="M.600 .800h4L6 2.700 7.400 .800h4L8.100 5.100l3.300 4.400h-4L6 7.500 4.600 9.500h-4L3.900 5.100z" fill="#fdfdfd" stroke="#4a5560" stroke-width=".9" stroke-linejoin="round"/></svg></i></div>
<div style="left:726px;top:469px;width:321px;height:241px;background:#f0f0f0"></div>
<span class="t" style="left:729px;top:473px;letter-spacing:-0.7px">Number of Junction Nodes</span>
<div class="tb" style="left:886px;top:473px;width:39px;height:17px;background:#f0f0f0;"><span>0</span></div>
<div class="btn dis" style="left:958px;top:473px;width:81px;height:25px;line-height:23px;">New</div>
<div class="btn dis" style="left:958px;top:507px;width:81px;height:25px;line-height:23px;">Add</div>
<div class="btn dis" style="left:958px;top:537px;width:81px;height:25px;line-height:23px;">Cancel</div>
<div class="btn dis" style="left:958px;top:569px;width:81px;height:25px;line-height:23px;">Delete</div>
<div class="btn " style="left:958px;top:599px;width:81px;height:33px;line-height:31px;">Accept</div>
<span class="t" style="left:734px;top:535px;">Junction Nodes Available</span>
<div class="lb" style="left:729px;top:555px;width:40px;height:68px;"></div>
<div class="lb" style="left:769px;top:555px;width:44px;height:68px;"></div>
<div class="lb" style="left:813px;top:555px;width:137px;height:94px;"></div>
<div style="left:815px;top:632px;width:134px;height:16px;background:#f0f0f0"></div>
<div style="left:831px;top:639px;width:34px;height:2px;background:#808080"></div>
<div style="left:728px;top:657px;width:312px;height:52px;background:#ffff00;border-left:2px solid #696969;border-top:2px solid #696969;border-right:1px solid #fff;border-bottom:1px solid #fff;box-sizing:border-box"></div>
<span class="t" style="left:730px;top:659px;letter-spacing:-0.58px">If you want to delete any of these existing junction nodes, select it</span>
<span class="t" style="left:730px;top:672px;letter-spacing:-0.58px">and then press [Delete].  Otherwise press [Continue]</span>
<svg class="abs" style="left:1236px;top:244px;opacity:.40" width="100" height="122" viewBox="0 0 100 122"><g fill="#646464"><g><path d="M38.500 5C14 14 4 36 8.500 52.500H15C12 36 20 18 38.500 5z"/><path d="M41 11C24 18 15 30 16.500 41.500H23C22 31 29 20 41 11z"/><path d="M16.500 38.500H31l-.8 3H16.500z"/><path d="M8.500 49.500H29.500l.6 3H8.500z"/><path d="M11.500 59.500H33l2 3H12z"/><path d="M8.500 52C12 80 32 104 46 119L46.500 114.500C34 100 16.500 78 12.500 52z"/><path d="M13 62C20 82 35 97 47 107.500L47.500 104C37 94 24 80 17 62z"/></g><g transform="translate(99.400,0) scale(-1,1)"><path d="M38.500 5C14 14 4 36 8.500 52.500H15C12 36 20 18 38.500 5z"/><path d="M41 11C24 18 15 30 16.500 41.500H23C22 31 29 20 41 11z"/><path d="M16.500 38.500H31l-.8 3H16.500z"/><path d="M8.500 49.500H29.500l.6 3H8.500z"/><path d="M11.500 59.500H33l2 3H12z"/><path d="M8.500 52C12 80 32 104 46 119L46.500 114.500C34 100 16.500 78 12.500 52z"/><path d="M13 62C20 82 35 97 47 107.500L47.500 104C37 94 24 80 17 62z"/></g></g><circle cx="49.700" cy="46" r="20.300" fill="#fff" fill-opacity=".35" stroke="#646464" stroke-width="3"/><ellipse cx="43.800" cy="52.500" rx="4.600" ry="2" transform="rotate(52 43.800 52.500)" fill="#5c68ff"/><ellipse cx="55.800" cy="52.500" rx="4.600" ry="2" transform="rotate(-52 55.800 52.500)" fill="#5c68ff"/></svg>
<div class="abs" style="left:1266px;top:371px;width:41px;height:8px;border-radius:50%;background:#6a74ee;opacity:.55"></div>
<span class="abs" style="left:1216px;top:383px;font:bold 24px/28px 'Liberation Sans',sans-serif;color:#9fa6f4;opacity:.62;white-space:pre;transform:scaleX(.90);transform-origin:0 0">ENGP<span style="position:static;color:#a9a9a9">EDIA.IR</span></span>
</div>
<div id="sbar"></div>
<div class="sp" style="left:2px;top:734px;width:959px;height:16px;"></div>
<span class="t" style="left:5px;top:735px;letter-spacing:-0.75px">Perform operations on hydrographs</span>
<span class="t" style="left:971px;top:735px;">PATH:</span>
<div class="sp" style="left:1012px;top:734px;width:283px;height:16px;"></div>
<span class="t" style="left:1016px;top:735px;letter-spacing:-0.45px">C:\Users\P\AppData\Local\Programs\MIDUSS\Samples</span>
<span class="t" style="left:1305px;top:735px;">INPUT:</span>
<div class="sp" style="left:1350px;top:734px;width:64px;height:16px;"></div>
<span class="t" style="left:1354px;top:735px;">Large1.out</span>
<span class="t" style="left:1425px;top:735px;">OUTPUT:</span>
<div class="sp" style="left:1480px;top:734px;width:100px;height:16px;"></div>
<span class="t" style="left:1485px;top:735px;">Sampleville100.out</span>
</body></html>
